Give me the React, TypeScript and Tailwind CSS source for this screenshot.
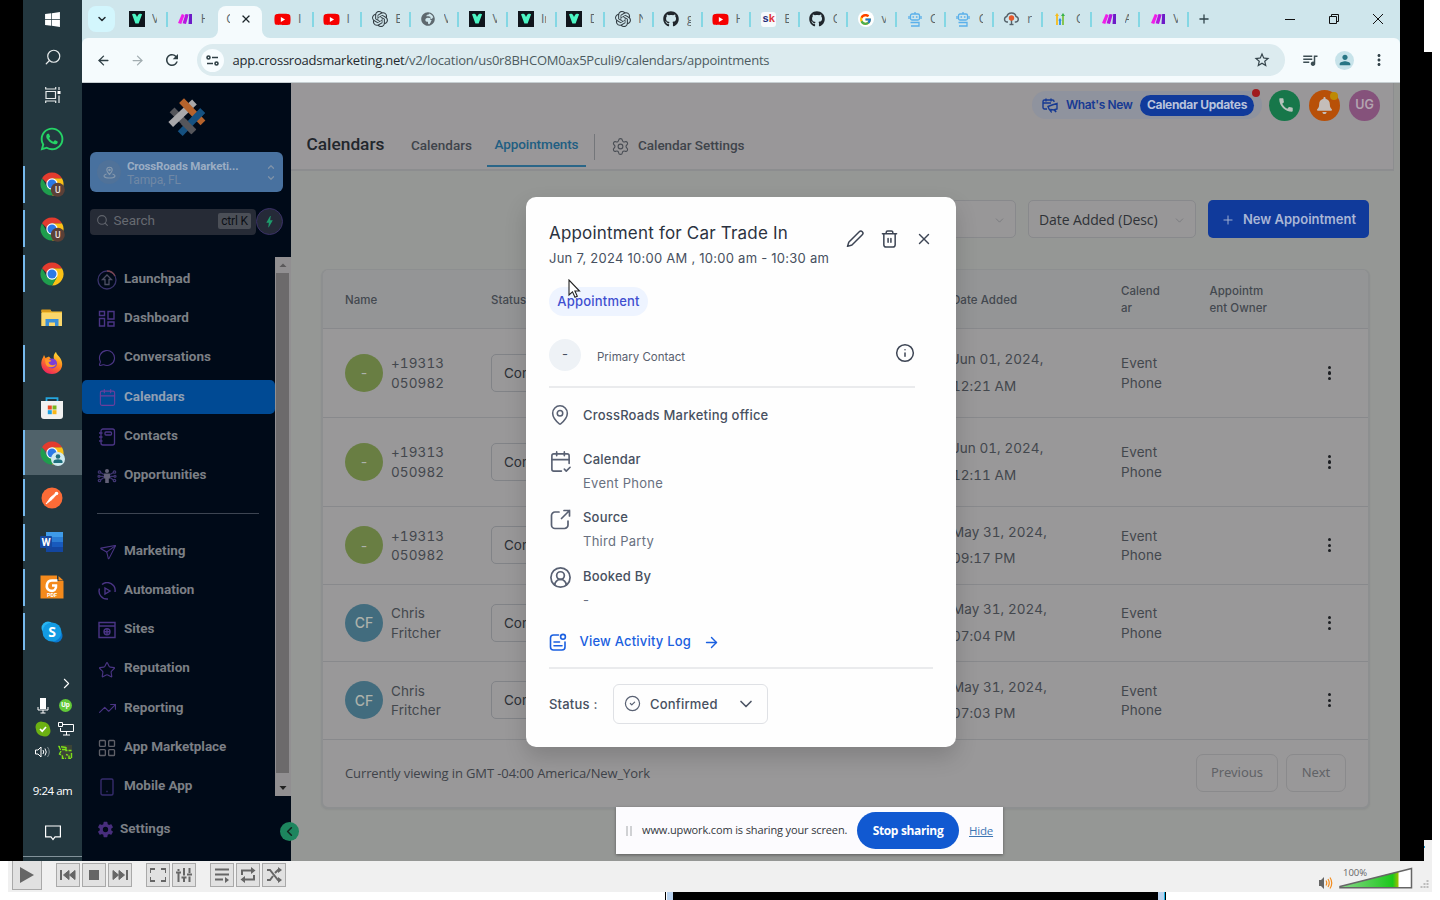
import React from "react";
import {
  ArrowLeft, ArrowRight, Calendar, ChevronDown, ChevronLeft, ChevronRight, ChevronUp, CircleCheck, Info,
  LayoutGrid, MapPin, MessageCircle, Plus, Search, Send, Settings, Star,
  TrendingUp, X, CalendarCheck2, CircleUserRound,
} from "lucide-react";
import { FaGithub, FaYoutube, FaWhatsapp, FaWindows, FaBell, FaGlobeAfrica } from "react-icons/fa";
import { SiOpenai } from "react-icons/si";
import { FcGoogle } from "react-icons/fc";
import { IoSettingsSharp } from "react-icons/io5";
import { MdBolt, MdCall, MdMoreVert, MdOutlineQueueMusic, MdPerson, MdRefresh, MdStarOutline } from "react-icons/md";

/* ---------- favicons ---------- */

const VIcon = () => (
  <svg width="16" height="16" viewBox="0 0 16 16">
    <rect width="16" height="16" fill="#10151c" />
    <path d="M3 3.2c1.6-1 3.6-.5 4.2 1L8 6l.9-1.800c.7-1.500 2.700-2 4.200-1L9.600 12.500H6.400z" fill="#4df5c4" />
  </svg>
);
const MakeIcon = () => (
  <svg width="14" height="14" viewBox="1 1 14 14">
    <path d="M4.800 3 7.600 4 4.300 13 1 12z" fill="#f01fe8" />
    <path d="M8.500 3l3.200.6L9 13l-3.400-.7z" fill="#b516e0" />
    <path d="M12.200 3H15v10h-3.500z" fill="#6d1bc8" />
  </svg>
);
const SkIcon = () => (
  <div className="flex h-[15px] w-[15px] items-center justify-center rounded-[3px] bg-[#f6fafc] pb-px font-['Liberation_Sans'] text-[11px] leading-none font-bold">
    <span className="text-[#1d2a7a]">s</span>
    <span className="text-[#e0343a]">k</span>
  </div>
);
const BotIcon = () => (
  <svg width="14" height="16" viewBox="1 0 14 16" fill="none" stroke="#5ab0ea" strokeWidth="1.300">
    <rect x="3.500" y="3" width="9" height="6" rx="1.500" />
    <path d="M8 3V1M2 5v3M14 5v3M3.500 11.500h8.500v3.500h-8" />
    <path d="M6.300 5.300v1.500M9.700 5.300v1.500" strokeWidth="1.600" />
  </svg>
);
const CloudIcon = () => (
  <svg width="17" height="16" viewBox="0 0 17 16" fill="none" stroke="#55626a" strokeWidth="1.400">
    <path d="M5 11H3.800a2.800 2.800 0 0 1 0-5.500C4.500 3 6.500 2 8.500 2s4 1 4.500 3.500a2.800 2.800 0 0 1 0 5.500h-1.200" />
    <path d="M8.500 8v6" />
    <circle cx="8.500" cy="7" r="2" fill="#e8592b" stroke="#e8592b" />
    <path d="M6.500 13.500h4" />
  </svg>
);
const ArrowsIcon = () => (
  <svg width="10" height="14" viewBox="0 0 10 14" fill="none" strokeWidth="1.800">
    <path d="M2 13V3" stroke="#f6bd1c" />
    <path d="m0 4 2-3 2 3z" fill="#f6bd1c" />
    <path d="M5 13V8" stroke="#2d8fe8" />
    <path d="m3.200 8.500 1.800-2.500 1.800 2.500z" fill="#2d8fe8" />
    <path d="M8 13V3" stroke="#7dc242" />
    <path d="m6 4 2-3 2 3z" fill="#37b24d" />
  </svg>
);
const YT = () => (
  <span className="relative flex items-center justify-center">
    <span className="absolute h-[6px] w-[8px] bg-white" />
    <FaYoutube size={17} color="#f60000" className="relative" />
  </span>
);
const GIcon = () => (
  <span className="flex h-4 w-4 items-center justify-center rounded-full bg-white"><FcGoogle size={13} /></span>
);

type Tab = { icon: React.ReactNode; t: string; sep?: boolean; active?: boolean };
const tabs: Tab[] = [
  { icon: <VIcon />, t: "V", sep: true },
  { icon: <MakeIcon />, t: "H" },
  { icon: null, t: "C", active: true },
  { icon: <YT />, t: "I", sep: true },
  { icon: <YT />, t: "I", sep: true },
  { icon: <SiOpenai size={16} color="#333e44" />, t: "E", sep: true },
  { icon: <FaGlobeAfrica size={14} color="#5d686e" />, t: "V", sep: true },
  { icon: <VIcon />, t: "V", sep: true },
  { icon: <VIcon />, t: "In", sep: true },
  { icon: <VIcon />, t: "D", sep: true },
  { icon: <SiOpenai size={16} color="#333e44" />, t: "N", sep: true },
  { icon: <FaGithub size={16} color="#20262c" />, t: "g", sep: true },
  { icon: <YT />, t: "H", sep: true },
  { icon: <SkIcon />, t: "E", sep: true },
  { icon: <FaGithub size={16} color="#20262c" />, t: "C", sep: true },
  { icon: <GIcon />, t: "v", sep: true },
  { icon: <BotIcon />, t: "C", sep: true },
  { icon: <BotIcon />, t: "C", sep: true },
  { icon: <CloudIcon />, t: "r", sep: true },
  { icon: <ArrowsIcon />, t: "C", sep: true },
  { icon: <MakeIcon />, t: "A", sep: true },
  { icon: <MakeIcon />, t: "V", sep: true },
];

function TabStrip() {
  return (
    <div className="flex h-[38px] bg-[#cfe6ec] pl-[6px]">
      <div className="mt-[6px] flex h-[26px] w-[27px] items-center justify-center rounded-[8px] bg-[#d3f6fd]">
        <ChevronDown size={12} strokeWidth={3} color="#222b30" />
      </div>
      <div className="ml-[4px] flex">
        {tabs.map((tab, i) =>
          tab.active ? (
            <div key={i} className="relative mr-[3px] ml-[2px] flex h-[38px] w-[43.640px] pt-[6px]">
              <div className="flex flex-1 items-center rounded-t-[8px] bg-[#f5fbfd] pb-[6px] pl-[8px]">
                <span className="w-[4px] overflow-hidden font-['Open_Sans'] text-[12px] text-[#58666c]">C</span>
                <X size={12} strokeWidth={2.600} color="#1d262b" className="ml-[10px]" />
              </div>
              <svg className="absolute bottom-0 -left-[8px]" width="8" height="8"><path d="M8 0v8H0a8 8 0 0 0 8-8z" fill="#f5fbfd" /></svg>
              <svg className="absolute -right-[8px] bottom-0" width="8" height="8"><path d="M0 0v8h8a8 8 0 0 1-8-8z" fill="#f5fbfd" /></svg>
            </div>
          ) : (
            <div key={i} className="flex h-[38px] w-[48.640px] items-center">
              <div className="ml-[8.500px] flex w-[18px] shrink-0 justify-center">{tab.icon}</div>
              <span className="ml-[6.500px] w-[4.500px] overflow-hidden font-['Open_Sans'] text-[12px] text-[#58666c]">{tab.t}</span>
              {tab.sep && <span className="ml-auto h-[15px] w-[2px] bg-[#84d7e4]" />}
            </div>
          )
        )}
      </div>
      <div className="ml-[7px] flex w-4 items-center justify-center"><Plus size={14} strokeWidth={2.200} color="#30434a" /></div>
      <div className="ml-auto flex items-center">
        <svg width="10" height="10" className="mr-[34px]"><path d="M0 5.500h10" stroke="#111" /></svg>
        <svg width="10" height="10" viewBox="0 0 10 10" fill="none" stroke="#111" className="mr-[34px]"><path d="M.5 2.500h7v7h-7zM2.500 2.500v-2h7v7h-2" /></svg>
        <svg width="10" height="10" viewBox="0 0 10 10" stroke="#111" className="mr-[17px]"><path d="M0 0l10 10M10 0L0 10" /></svg>
      </div>
    </div>
  );
}

function Toolbar() {
  return (
    <div className="flex h-[45px] items-center bg-[#cfe6ec]">
      <div className="flex h-full w-full items-center rounded-t-[6px] border-b-[1px] border-[#c6ced1] bg-[#f5fbfd] font-['Open_Sans']">
        <ArrowLeft size={15} strokeWidth={2.200} color="#2f3f45" className="ml-[14px]" />
        <ArrowRight size={15} strokeWidth={2} color="#a2adb1" className="ml-[19px]" />
        <MdRefresh size={18} color="#2f3f45" className="ml-[18px]" />
        <div className="ml-[16px] flex h-[32px] w-[1088px] items-center rounded-full bg-[#dcebef]">
          <div className="ml-[4px] flex h-[23px] w-[23px] items-center justify-center rounded-full bg-[#f8fdff]">
            <svg width="13" height="11" viewBox="0 0 13 11" fill="none" stroke="#2f3f45" strokeWidth="1.600"><circle cx="2.500" cy="2.500" r="1.500" /><path d="M6 2.500h6M1 8.500h6" /><circle cx="10.500" cy="8.500" r="1.500" /></svg>
          </div>
          <span className="ml-[8.500px] pt-px text-[13px] tracking-[-0.215px] whitespace-nowrap text-[#4d5b61]">
            <span className="text-[#1f292e]">app.crossroadsmarketing.net</span>/v2/location/us0r8BHCOM0ax5Pculi9/calendars/appointments
          </span>
          <MdStarOutline size={18} color="#33434a" className="mr-[14px] ml-auto" />
        </div>
        <MdOutlineQueueMusic size={18} color="#3c4d53" className="ml-[16px]" />
        <div className="ml-[16px] flex h-[19px] w-[19px] items-center justify-center rounded-full bg-[#c7e3ea]"><MdPerson size={16} color="#287685" /></div>
        <MdMoreVert size={18} color="#33434a" className="ml-[16px]" />
      </div>
    </div>
  );
}

/* ---------- OS taskbar ---------- */

const Chrome = ({ badge }: { badge?: "u" | "p" }) => (
  <svg width="26" height="26" viewBox="0 0 26 26" className="overflow-visible">
    <path d="M13 7.250h9.960A11.500 11.500 0 0 1 13 24.500l5-8.600z" fill="#fbc116" />
    <path d="M8 15.900 3.040 7.250A11.500 11.500 0 0 0 13 24.500l5-8.600z" fill="#1f9d4d" />
    <path d="M13 1.500A11.500 11.500 0 0 0 3.040 7.250l5 5L13 7.250h9.960A11.500 11.500 0 0 0 13 1.500z" fill="#e33b2e" />
    <circle cx="13" cy="13" r="5.700" fill="#fff" />
    <circle cx="13" cy="13" r="4.500" fill="#2b79e6" />
    {badge === "u" && (
      <>
        <circle cx="18.800" cy="18.700" r="7" fill="#5b4037" />
        <text x="18.800" y="22" fontSize="8.500" fontFamily="Roboto" fontWeight="500" fill="#efe8e5" textAnchor="middle">U</text>
      </>
    )}
    {badge === "p" && (
      <>
        <circle cx="19" cy="19" r="7" fill="#cfe9ef" />
        <circle cx="19" cy="16.500" r="2.300" fill="#1f6f7d" />
        <path d="M14.500 23v-1.500c0-3 9-3 9 0V23z" fill="#1f6f7d" />
      </>
    )}
  </svg>
);
const Folder = () => (
  <svg width="22" height="18" viewBox="0 0 22 18"><path d="M.5 1h9l1 1.500h10.500V17H.5z" fill="#f6c23c" /><path d="M.5.500h9l1 2.500H.5z" fill="#d99a1c" /><path d="M.5 4h20.500v13H.5z" fill="#fbd76b" /><path d="M4.500 17v-7h13v7h-3.500v-3.500h-6V17z" fill="#3b8fd8" /></svg>
);
const Firefox = () => (
  <svg width="24" height="24" viewBox="0 0 24 24">
    <defs><linearGradient id="ff" x1=".8" y1="0" x2=".3" y2="1"><stop offset="0" stopColor="#ffe43a" /><stop offset=".45" stopColor="#ff8a1c" /><stop offset="1" stopColor="#ee1f5f" /></linearGradient></defs>
    <path d="M4 4l1.500 3L9 5.500 11 8h3c-1-3 .5-6 2-7 .5 2.500 3 4 4.500 6.500C25 15 20 23 12 23 5 23 .8 17.500 1.300 11.500 1.700 8 3 7 4 4z" fill="url(#ff)" />
    <circle cx="12" cy="12.500" r="5" fill="#7b3fd6" />
    <path d="M5 8.500c3-.5 5 0 6.500 1.500l-3 1.200c1 3 4 4 7.500 1.800-1 4-9 5-10.500-.5z" fill="#ff9a2a" />
  </svg>
);
const Store = () => (
  <svg width="22" height="22" viewBox="0 0 22 22"><path d="M5.500 5V1.200h11V5" fill="none" stroke="#25a5dd" strokeWidth="1.800" /><path d="M0 4h22v15a3 3 0 0 1-3 3H3a3 3 0 0 1-3-3z" fill="#f1f1f1" /><path d="M6.800 8.500h4v4h-4z" fill="#ea4b26" /><path d="M11.500 8.500h4v4h-4z" fill="#7ab51d" /><path d="M6.800 13.200h4v4h-4z" fill="#1ba1e2" /><path d="M11.500 13.200h4v4h-4z" fill="#f8b617" /></svg>
);
const Postman = () => (
  <svg width="22" height="22" viewBox="0 0 22 22"><circle cx="11" cy="11" r="10.500" fill="#fb6b37" /><path d="M5 17l4.500-6.500 5-4 .8 1.200-4.300 4.800z" fill="#fff" stroke="#fff" strokeWidth=".8" /><circle cx="15.500" cy="6.500" r="1.800" fill="#fff" /></svg>
);
const Word = () => (
  <svg width="24" height="22" viewBox="0 0 24 22"><path d="M6 1h17v5H6z" fill="#3f9be8" /><path d="M6 6h17v5H6z" fill="#2b7cd3" /><path d="M6 11h17v5H6z" fill="#185abd" /><path d="M6 16h17v5H6z" fill="#1346a0" /><rect x="0" y="5" width="12" height="12" rx="1" fill="#1549a0" /><text x="6" y="15" fontSize="10.500" fontFamily="Roboto" fontWeight="700" fill="#fff" textAnchor="middle">W</text></svg>
);
const Foxit = () => (
  <svg width="24" height="24" viewBox="0 0 24 24"><path d="M.5.500H17V6h6.500v17.500H.5z" fill="#f48a1c" /><path d="M18.500 1l5 4.500h-5z" fill="#f48a1c" /><path d="M17.500 5.500H12a5.200 5.200 0 0 0-2 10c4 1.300 6.500-1.300 6-5H12" fill="none" stroke="#fff" strokeWidth="2.600" /><text x="12" y="22.300" fontSize="5.500" fontFamily="Roboto" fontWeight="700" fill="#fff" textAnchor="middle">PDF</text></svg>
);
const Skype = () => (
  <svg width="22" height="22" viewBox="0 0 22 22"><circle cx="7" cy="7" r="6.500" fill="#28b5f2" /><circle cx="15" cy="15" r="6.500" fill="#0a78d0" /><circle cx="11" cy="11" r="9.500" fill="#139be3" /><text x="11" y="16" fontSize="14" fontFamily="Open Sans" fontWeight="700" fill="#fff" textAnchor="middle">S</text></svg>
);

const apps: { el: React.ReactNode; open?: boolean; active?: boolean }[] = [
  { el: <FaWhatsapp size={26} color="#25d366" /> },
  { el: <Chrome badge="u" />, open: true },
  { el: <Chrome badge="u" />, open: true },
  { el: <Chrome />, open: true },
  { el: <Folder /> },
  { el: <Firefox />, open: true },
  { el: <Store /> },
  { el: <Chrome badge="p" />, open: true, active: true },
  { el: <Postman />, open: true },
  { el: <Word />, open: true },
  { el: <Foxit />, open: true },
  { el: <Skype />, open: true },
];

function Taskbar() {
  return (
    <div className="flex h-full w-[59px] flex-col bg-[#23373f]">
      <div className="flex h-[38px] items-center justify-center"><FaWindows size={17} color="#fff" /></div>
      <div className="flex h-[38px] items-center justify-center"><Search size={18} strokeWidth={1.600} color="#e7ebec" className="-scale-x-100" /></div>
      <div className="flex h-[38px] items-center justify-center">
        <svg width="16" height="16" viewBox="0 0 16 16" fill="none" stroke="#e7ebec" strokeWidth="1.200"><path d="M1 4.500h9.500v7H1zM.7 0v2h10V0M.7 16v-2h10v2M14 0v3M14 8.500V16" /><path d="M12.500 4h3v3h-3z" fill="#fff" stroke="none" /></svg>
      </div>
      <div className="mt-[3px] flex flex-col">
        {apps.map((a, i) => (
          <div key={i} className={"flex h-[44.770px] items-center " + (a.active ? "bg-[#50626a]" : "")}>
            <div className={"w-[2px] " + (a.active ? "h-full bg-[#76b9ed]" : a.open ? "h-[37px] bg-[#76b9ed]" : "h-0")} />
            <div className="flex flex-1 items-center justify-center pr-[3px]">{a.el}</div>
          </div>
        ))}
      </div>
      <div className="mt-[18px] flex h-[22px] items-center pl-[35px]"><ChevronRight size={17} strokeWidth={1.500} color="#fff" /></div>
      <div className="grid grid-cols-[23px_23px] grid-rows-[23px_23px_23px] place-items-center pl-[8px]">
        <svg width="12" height="16" viewBox="0 0 12 16" fill="none" stroke="#fff"><rect x="3.500" y=".5" width="5" height="10" fill="#fff" /><path d="M1 9v3h10V9M6 12v3M3.500 15h5" /></svg>
        <span className="flex h-[13px] w-[13px] items-center justify-center rounded-full bg-[#62c939] font-['Roboto'] text-[7px] font-bold text-white">Up</span>
        <svg width="16" height="16" viewBox="0 0 16 16"><circle cx="6" cy="6" r="5.500" fill="#6cb113" /><circle cx="10" cy="10" r="5.500" fill="#6cb113" /><circle cx="8" cy="8" r="7" fill="#6cb113" /><path d="m5 8 2.200 2.200L11 6" fill="none" stroke="#fff" strokeWidth="1.700" /></svg>
        <svg width="16" height="14" viewBox="0 0 16 14" fill="none" stroke="#fff"><path d="M5 2.500h10.500v7H2.500V6M8.500 9.500v3.500M5 13h7M.5.500h4v4h-4z" /></svg>
        <svg width="16" height="12" viewBox="0 0 16 12" fill="none" stroke="#fff"><path d="M.5 4h2.500l3-3v10L3 8H.5zM8 4q1.500 2 0 4M10 2.500q2.500 3.500 0 7" /><path d="M12.500 1q3.500 5 0 10" stroke="#7f8c91" /></svg>
        <svg width="15" height="14" viewBox="0 0 15 14"><path d="M3 0h11v14H3z" fill="#3c4436" /><path d="M8 2.500 1 1.500 3 6 1.500 9l3 2V13.500h3.500M4 4.500h4.500M8 2v3.500h5.500M13.500 8v5.500H11V10.500L8 9.500" fill="none" stroke="#7be01a" strokeWidth="1.400" strokeDasharray="5 1" /></svg>
      </div>
      <div className="mt-[16px] text-center font-['Open_Sans'] text-[11.500px] leading-[24px] tracking-[-0.450px] whitespace-nowrap text-white">9:24 am</div>
      <div className="mt-[20px] flex justify-center pt-[2px]">
        <svg width="16" height="16" viewBox="0 0 16 16" fill="none" stroke="#fff" strokeWidth="1.200"><path d="M.6 1h14.800v10.800H10L8 14.500l-2-2.700H.6z" /></svg>
      </div>
      <div className="mt-auto mb-[4px] h-px bg-[#82929a]" />
    </div>
  );
}

/* ---------- App sidebar ---------- */

const P = "#4a3585";
const sidebarTop: [React.ReactNode, string][] = [
  [<svg width="20" height="20" viewBox="0 0 20 20" fill="none" stroke="#39336b" strokeWidth="1.300"><circle cx="10" cy="10" r="9" /><path d="M10 1a9 9 0 0 1 8 5" stroke="#7a4550" /><path d="m10 5 4.500 4.500h-2.500v5H8v-5H5.500z" stroke="#4c4f63" /></svg>, "Launchpad"],
  [<svg width="18" height="18" viewBox="0 0 18 18" fill="none" stroke={P} strokeWidth="1.400"><path d="M1.500 1.500h5v4h-5zM1.500 8.500h5v7.500h-5zM10 1.500h6v7.500h-6zM10 12h6v4h-6z" /></svg>, "Dashboard"],
  [<MessageCircle size={18} strokeWidth={1.500} color={P} />, "Conversations"],
  [<Calendar size={19} strokeWidth={1.400} color="#6b3f9c" />, "Calendars"],
  [<svg width="18" height="18" viewBox="0 0 18 18" fill="none" stroke={P} strokeWidth="1.300"><rect x="3" y="1" width="13.500" height="16" rx="2" /><rect x="7" y="4" width="6.500" height="3" rx="1" /><path d="M1 5h3.500M1 9h3.500M1 13h3.500" /></svg>, "Contacts"],
  [<svg width="20" height="18" viewBox="0 0 20 18" fill="none" stroke="#3f3570" strokeWidth="1.300"><circle cx="10" cy="4" r="2" fill="#626077" stroke="none" /><path d="M7 6.500h6v5h-1.200V16H8.200v-4.500H7z" fill="#626077" stroke="none" /><circle cx="2.500" cy="5" r="1.200" /><circle cx="17.500" cy="5" r="1.200" /><circle cx="2" cy="9.300" r="1" /><circle cx="18" cy="9.300" r="1" /><circle cx="2.500" cy="13.500" r="1.200" /><circle cx="17.500" cy="13.500" r="1.200" /><path d="M3.500 5.500 7 7.500M16.500 5.500 13 7.500M3.500 13 7 10.500M16.500 13 13 10.500M3 9.300h4M17 9.300h-4" /></svg>, "Opportunities"],
];
const sidebarBottom: [React.ReactNode, string][] = [
  [<Send size={17} strokeWidth={1.500} color={P} className="rotate-[8deg]" />, "Marketing"],
  [<svg width="18" height="18" viewBox="0 0 18 18" fill="none" stroke={P} strokeWidth="1.400"><path d="M4 2.500A8 8 0 0 1 17 10M1.500 6.500A8 8 0 0 0 10 17M7 6l5 3-5 3z" /></svg>, "Automation"],
  [<svg width="18" height="18" viewBox="0 0 18 18" fill="none" stroke={P} strokeWidth="1.400"><path d="M1 1.500h16v15H1zM1 5h16" /><circle cx="9" cy="10.800" r="3" /><path d="M6 10.800h6M9 7.800v6" /></svg>, "Sites"],
  [<Star size={18} strokeWidth={1.500} color={P} />, "Reputation"],
  [<TrendingUp size={19} strokeWidth={1.400} color={P} />, "Reporting"],
  [<LayoutGrid size={20} strokeWidth={1.600} color="#5f6068" />, "App Marketplace"],
  [<svg width="14" height="18" viewBox="0 0 14 18" fill="none" stroke="#352c6c" strokeWidth="1.400"><rect x="1" y="1" width="12" height="16" rx="1.500" /><path d="M6.300 13.500h1.400" /></svg>, "Mobile App"],
];

const NavItem = ({ icon, label }: { icon: React.ReactNode; label: string }) => (
  <div className="flex h-[39.300px] shrink-0 items-center">
    <div className={"flex h-[34px] w-full items-center pl-[15px] " + (label === "Calendars" ? "rounded-[5px] bg-[#004a94] text-[#8f9fb3]" : "text-[#7b7f85]")}>
      <span className="flex w-[20px] justify-center pt-[1.500px]">{icon}</span>
      <span className="ml-[7px] pb-[2.500px] text-[13.500px] font-bold tracking-[-0.050px]">{label}</span>
    </div>
  </div>
);

function Sidebar() {
  return (
    <div className="relative flex h-full w-[209px] flex-col bg-[#000a18] font-['Roboto']">
      <div className="flex h-[69px] shrink-0 items-center justify-center pb-[2px]">
        <svg width="38" height="38" viewBox="0 0 112 112" fill="none" strokeWidth="20">
          <path d="M12 35 76 100" stroke="#55565b" />
          <path d="M102 37 36 105" stroke="#155181" />
          <path d="M78 12 8 78" stroke="#a9a8aa" />
          <path d="M40 8 103 73" stroke="#b5632c" />
          <path d="M46 70 76 100" stroke="#55565b" />
          <path d="M102 37 76 64" stroke="#155181" />
        </svg>
      </div>
      <div className="ml-[8px] flex h-[40px] w-[193px] shrink-0 items-center rounded-[6px] bg-[#48719f]">
        <div className="ml-[7px] flex h-[24px] w-[24px] items-center justify-center rounded-full bg-[#507299]">
          <svg width="13" height="13" viewBox="0 0 13 13" fill="none" stroke="#8699ad" strokeWidth="1.100"><path d="M6.500 8.500C4.500 6.500 3.800 5.500 3.800 4a2.700 2.700 0 0 1 5.400 0c0 1.500-.7 2.500-2.700 4.500z" /><circle cx="6.500" cy="4" r=".7" /><path d="M3.500 8C-1 9.500 1 12 6.500 12s7.500-2.500 3-4" /></svg>
        </div>
        <div className="ml-[6px] pt-px text-[12px] leading-[14px] text-[#8497ae]">
          <div className="text-[11.500px] font-bold tracking-[-0.160px] text-[#9badc3]">CrossRoads Marketi...</div>
          <div className="tracking-[-0.150px] text-[#7088a5]">Tampa, FL</div>
        </div>
        <div className="mr-[7px] ml-auto flex flex-col gap-[1px]">
          <ChevronUp size={10} strokeWidth={3} color="#7f92a8" />
          <ChevronDown size={10} strokeWidth={3} color="#7f92a8" />
        </div>
      </div>
      <div className="mt-[15px] ml-[8px] flex h-[28px] shrink-0 items-center">
        <div className="mt-px flex h-[26px] w-[166px] items-center rounded-[4px] bg-[#262b36] pb-[2px] pl-[6px]">
          <Search size={13} strokeWidth={2} color="#60646c" />
          <span className="ml-[4.500px] text-[13.500px] text-[#666a71]">Search</span>
          <span className="mr-[5px] ml-auto rounded-[2px] bg-[#4b4f57] px-[3px] text-[12px] leading-[16px] tracking-[-0.150px] text-[#0c0f16]">ctrl K</span>
        </div>
        <div className="flex h-[27px] w-[27px] items-center justify-center rounded-full border border-[#3b3168] bg-[#252a38]"><MdBolt size={15} color="#1e9b6c" /></div>
      </div>
      <div className="mt-[22px] flex h-[539px] shrink-0">
        <div className="flex w-[192.500px] flex-col pt-[2.500px]">
          {sidebarTop.map(([icon, label]) => <NavItem key={label} icon={icon} label={label} />)}
          <div className="mt-[18px] mr-[16px] mb-[17px] ml-[15px] h-px shrink-0 bg-[#3d4552]" />
          {sidebarBottom.map(([icon, label]) => <NavItem key={label} icon={icon} label={label} />)}
        </div>
        <div className="flex w-[16.500px] flex-col items-center bg-[#918f91]">
          <svg width="8" height="16" viewBox="0 0 8 16"><path d="M4 6.500 7.500 10h-7z" fill="#5b595b" /></svg>
          <div className="w-[13px] flex-1 bg-[#6c6a6b]" />
          <svg width="8" height="23" viewBox="0 0 8 23"><path d="M4 17 .5 13h7z" fill="#222" /></svg>
        </div>
      </div>
      <div className="flex h-[66px] shrink-0 items-center pl-[15px] text-[13.500px] font-bold text-[#7b7f85]">
        <IoSettingsSharp size={17} color="#482e7d" />
        <span className="ml-[6px] pb-px">Settings</span>
      </div>
      <div className="absolute right-[-8px] bottom-[20px] flex h-[19px] w-[19px] items-center justify-center rounded-full bg-[#1d855e]"><ChevronLeft size={15} strokeWidth={2.500} color="#12251f" /></div>
    </div>
  );
}

/* ---------- Main content ---------- */

const rows = [
  { h: "h-[89px]", a: "-", n1: "+19313", n2: "050982", d1: "Jun 01, 2024,", d2: "12:21 AM" },
  { h: "h-[89px]", a: "-", n1: "+19313", n2: "050982", d1: "Jun 01, 2024,", d2: "12:11 AM" },
  { h: "h-[77.500px]", a: "-", n1: "+19313", n2: "050982", d1: "May 31, 2024,", d2: "09:17 PM" },
  { h: "h-[77.500px]", a: "CF", n1: "Chris", n2: "Fritcher", d1: "May 31, 2024,", d2: "07:04 PM" },
  { h: "h-[77.500px]", a: "CF", n1: "Chris", n2: "Fritcher", d1: "May 31, 2024,", d2: "07:03 PM" },
];

function Header() {
  return (
    <div className="mr-[6px] h-[88px] border-r border-b-2 border-[#8c8d8f] bg-[#999799]">
      <div className="flex h-[44px] items-center justify-end pr-[13px] font-['Inter']">
        <div className="relative flex h-[28px] w-[230px] items-center rounded-full bg-[#8f939e] pl-[10px]">
          <svg width="16" height="15" viewBox="0 0 16 15" fill="none" stroke="#163a93" strokeWidth="1.400"><path d="M5 11H2.500A1.500 1.500 0 0 1 1 9.500V3.500A1.500 1.500 0 0 1 2.500 2h8A1.500 1.500 0 0 1 12 3.500V4M1 5h8M4 .5v3M9 .5v3" /><path d="M6 8.500 10 7l5-1.500V11l-2 .5 1 2.500-1.800-2L9 11.500v2l-2-2.500z" /></svg>
          <span className="ml-[8px] text-[12px] font-semibold tracking-[-0.380px] whitespace-nowrap text-[#173a93]">What's New</span>
          <span className="ml-auto mr-[8px] flex h-[21px] w-[114px] items-center justify-center rounded-full bg-[#103a9b] text-[12px] font-bold tracking-[-0.300px] whitespace-nowrap text-[#b9c3dc]">Calendar Updates</span>
          <span className="absolute top-[-2px] right-[2px] h-[8px] w-[8px] rounded-full bg-[#a01b1e]" />
        </div>
        <div className="ml-[7px] flex h-[31px] w-[31px] items-center justify-center rounded-full bg-[#17774a]"><MdCall size={18} color="#b6c2bb" className="translate-x-px" /></div>
        <div className="relative ml-[9px] flex h-[31px] w-[31px] items-center justify-center rounded-full bg-[#b85008]">
          <FaBell size={17} color="#c4bdb9" />
          <span className="absolute top-[2px] right-[2px] h-[8px] w-[8px] rounded-full bg-[#bd8a05]" />
        </div>
        <div className="ml-[9px] flex h-[31px] w-[31px] items-center justify-center rounded-full bg-[#85527b] text-[12.500px] font-semibold text-[#b3a5b0]">UG</div>
      </div>
      <div className="flex h-[40px] items-center pl-[15.500px] font-['Roboto'] font-medium whitespace-nowrap">
        <span className="w-[104.500px] pb-[5px] text-[17.300px] text-[#22262c]">Calendars</span>
        <span className="w-[76px] pb-[4px] text-[13.500px] text-[#3f444b]">Calendars</span>
        <span className="flex h-full w-[99px] items-center justify-center border-b-2 border-[#2a6688] pb-[3px] text-[13.500px] tracking-[-0.100px] text-[#215e82]">Appointments</span>
        <span className="ml-[8px] h-[26px] w-px bg-[#74767a]" />
        <Settings size={19} strokeWidth={1.400} color="#4a4e55" className="mb-[1px] ml-[16px]" />
        <span className="ml-[8px] pb-[4px] text-[13.500px] tracking-[-0.050px] text-[#3f444b]">Calendar Settings</span>
      </div>
    </div>
  );
}

function Main() {
  return (
    <div className="flex min-w-0 flex-1 flex-col bg-[#959795]">
      <Header />
      <div className="mt-[29px] mr-[31px] flex h-[38px] justify-end gap-[12px] font-['Open_Sans'] text-[14px]">
        <div className="flex w-[168px] items-center justify-end rounded-[5px] border border-[#88898c] bg-[#989798] pt-[3px] pr-[9px]"><ChevronDown size={13} strokeWidth={1.300} color="#707276" /></div>
        <div className="flex w-[168px] items-center justify-between rounded-[5px] border border-[#88898c] bg-[#989798] pt-px pr-[9px] pl-[10px]">
          <span className="tracking-[-0.100px] whitespace-nowrap text-[#2f3237]">Date Added (Desc)</span>
          <ChevronDown size={13} strokeWidth={1.300} color="#707276" className="mt-[2px]" />
        </div>
        <div className="flex w-[161px] items-center justify-center rounded-[5px] bg-[#103a9b] pt-px font-['Inter'] text-[13px] font-semibold whitespace-nowrap text-[#a9b6d6]">
          <Plus size={14} strokeWidth={1.600} className="mr-[8px]" />
          New Appointment
        </div>
      </div>
      <div className="mt-[31px] ml-[30px] flex h-[540px] w-[1049px] flex-col rounded-[7px] border-2 border-t border-[#8d8f90] bg-[#999899] font-['Inter'] shadow-xs">
        <div className="grid h-[59px] shrink-0 grid-cols-[146px_461px_169px_88.500px_1fr] items-center rounded-t-[6px] border-b border-[#88898c] bg-[#949596] pt-[2px] pl-[22px] text-[11.500px] leading-[17px] font-medium tracking-[0.050px] text-[#43484f]">
          <span>Name</span>
          <span>Status</span>
          <span>Date Added</span>
          <span>Calend<br />ar</span>
          <span>Appointm<br />ent Owner</span>
        </div>
        {rows.map((r, i) => (
          <div key={i} className={r.h + " grid shrink-0 grid-cols-[146px_461px_169px_88.500px_1fr] items-center border-b border-[#88898c] pl-[22px] text-[13.500px] leading-[19.300px] tracking-[0.100px] text-[#43474d] tabular-nums"}>
            <div className="flex items-center">
              <span className={"flex h-[38px] w-[38px] items-center justify-center rounded-full text-[14px] tracking-normal text-[#adb2ab] " + (r.a === "-" ? "bg-[#697e43]" : "bg-[#426c7e] font-medium")}>{r.a}</span>
              <span className="ml-[8px] pt-[1.500px]">{r.n1}<br />{r.n2}</span>
            </div>
            <div className="flex h-[38px] w-[168px] items-center rounded-[5px] border border-[#818387] pt-px pl-[12px] tracking-normal text-[#2c3036]">Confirmed</div>
            <div className="leading-[26.700px] tracking-[0.050px]">{r.d1}<br />{r.d2}</div>
            <div className="pt-[1.500px]">Event<br />Phone</div>
            <div className="flex flex-col items-start gap-[2.200px] pl-[118px]">
              <i className="h-[3.300px] w-[3.300px] rounded-full bg-[#1c1e22]" />
              <i className="h-[3.300px] w-[3.300px] rounded-full bg-[#1c1e22]" />
              <i className="h-[3.300px] w-[3.300px] rounded-full bg-[#1c1e22]" />
            </div>
          </div>
        ))}
        <div className="flex flex-1 items-center pr-[22px] pl-[22px] font-['Open_Sans'] text-[13px]">
          <span className="tracking-[-0.110px] text-[#3f4349]">Currently viewing in GMT -04:00 America/New_York</span>
          <span className="ml-auto flex h-[38px] w-[82px] items-center justify-center rounded-[7px] border border-[#8a8a8c] pb-px font-['Noto_Sans'] text-[#606266]">Previous</span>
          <span className="ml-[8px] flex h-[38px] w-[60px] items-center justify-center rounded-[7px] border border-[#8a8a8c] pb-px font-['Noto_Sans'] text-[#606266]">Next</span>
        </div>
      </div>
    </div>
  );
}

/* ---------- Dialog ---------- */

const EditIcon = () => (
  <svg width="18" height="18" viewBox="0 0 24 24" fill="none" stroke="#3d4554" strokeWidth="2" strokeLinecap="round" strokeLinejoin="round"><path d="M21.700 6.300a2.500 2.500 0 0 0-4-4L4.300 15.600a3 3 0 0 0-.8 1.300L2 21.800l5-1.400a3 3 0 0 0 1.300-.8z" /></svg>
);
const Trash = () => (
  <svg width="17" height="20" viewBox="0 0 18 20" fill="none" stroke="#3d4554" strokeWidth="1.600" strokeLinecap="round"><path d="M1.500 4.500h15M5.500 4.500V3A1.500 1.500 0 0 1 7 1.500h4A1.500 1.500 0 0 1 12.500 3v1.500M3 4.500V16a2.500 2.500 0 0 0 2.500 2.500h7a2.500 2.500 0 0 0 2.500-2.500V4.500M7.500 9.500v4M10.500 9.500v4" /></svg>
);
const SourceIcon = () => (
  <svg width="21" height="21" viewBox="0 0 21 21" fill="none" stroke="#596173" strokeWidth="1.700" strokeLinecap="round"><path d="M9 3H5a3.500 3.500 0 0 0-3.500 3.500V16A3.500 3.500 0 0 0 5 19.500h9.500A3.500 3.500 0 0 0 18 16v-4M11.500 9.500l8-8M14 1.500h5.500V7" /></svg>
);
const LogIcon = () => (
  <svg width="18" height="18" viewBox="0 0 18 18" fill="none" stroke="#1a5fe0" strokeWidth="1.600" strokeLinecap="round"><path d="M9.500 2H4.500A3 3 0 0 0 1.500 5v9a3 3 0 0 0 3 3h8.500a3 3 0 0 0 3-3V9M5 9h5.500M5 12.800h8" /><circle cx="14" cy="3.800" r="2.400" /></svg>
);

const Detail = ({ icon, label, value }: { icon: React.ReactNode; label: string; value: string }) => (
  <div className="flex h-[58.400px]">
    <span className="flex h-[28px] w-[22px] items-center justify-center">{icon}</span>
    <div className="ml-[12px] leading-[24px]">
      <div className="font-medium text-[#475060]">{label}</div>
      <div className="tracking-[0.270px] text-[#687080]">{value}</div>
    </div>
  </div>
);

function Dialog() {
  return (
    <div className="absolute top-[197px] left-[444px] flex h-[550px] w-[430px] flex-col rounded-[10px] bg-[#fefefe] pl-[23px] font-['Inter'] text-[13px] tracking-[0.200px] whitespace-nowrap text-[#475060] shadow-[0_10px_22px_rgba(0,0,0,0.160)]">
      <div className="flex h-[73px] pt-[24px]">
        <div className="w-[297px] leading-[25px]">
          <div className="text-[17px] tracking-[0.190px] text-[#2b3240]">Appointment for Car Trade In</div>
          <div className="tracking-[0.250px]">Jun 7, 2024 10:00 AM , 10:00 am - 10:30 am</div>
        </div>
        <div className="flex h-[36px] items-center">
          <EditIcon />
          <span className="ml-[16.500px]"><Trash /></span>
          <X size={18} strokeWidth={1.900} color="#3d4554" className="ml-[17px]" />
        </div>
      </div>
      <div className="mt-[17px] flex h-[29px] w-[99px] items-center justify-center rounded-full bg-[#eef4ff] text-[13px] font-medium text-[#3f4fd0]">Appointment</div>
      <div className="mt-[23px] mr-[41px] flex h-[49px] border-b-2 border-[#eaebed]">
        <span className="flex h-[32px] w-[32px] items-center justify-center rounded-full bg-[#eef2f6]">-</span>
        <span className="ml-[16px] pt-[2px] text-[11.500px] leading-[33px] tracking-[0px] text-[#59606e]">Primary Contact</span>
        <Info size={20} strokeWidth={1.800} color="#3d4554" className="mt-[4px] ml-auto" />
      </div>
      <div className="mt-[15px] flex h-[24px] items-center">
        <span className="flex w-[22px] justify-center"><MapPin size={22} strokeWidth={1.700} color="#596173" /></span>
        <span className="ml-[12px] pt-[2px] font-medium">CrossRoads Marketing office</span>
      </div>
      <div className="mt-[20px]">
        <Detail icon={<CalendarCheck2 size={23} strokeWidth={1.700} color="#596173" className="shrink-0" />} label="Calendar" value="Event Phone" />
        <Detail icon={<SourceIcon />} label="Source" value="Third Party" />
        <Detail icon={<CircleUserRound size={23} strokeWidth={1.800} color="#596173" className="shrink-0" />} label="Booked By" value="-" />
      </div>
      <div className="mr-[23px] flex h-[46.800px] items-center border-b-2 border-[#eaebed] pb-[5px] font-medium text-[#1a5fe0]">
        <LogIcon />
        <span className="ml-[12.500px]">View Activity Log</span>
        <ArrowRight size={17} strokeWidth={2} className="ml-[12px]" />
      </div>
      <div className="mt-[15px] flex h-[40px] items-center font-medium">
        <span className="w-[64px] pt-[2px]">Status :</span>
        <div className="flex h-[40px] w-[155px] items-center rounded-[6px] border border-[#dfe1e5] pl-[10px]">
          <CircleCheck size={17} strokeWidth={1.700} color="#596173" />
          <span className="ml-[9px] pt-px">Confirmed</span>
          <ChevronDown size={20} strokeWidth={2} color="#4d5565" className="ml-[18px]" />
        </div>
      </div>
    </div>
  );
}

function ShareBar() {
  return (
    <div className="absolute top-[807px] left-[534px] flex h-[47px] w-[387px] items-center bg-[#fcfbfe] pl-[10px] font-['Open_Sans'] text-[11px] whitespace-nowrap text-[#33373c] shadow-[0_1px_3px_rgba(0,0,0,0.400)]">
      <span className="h-[10px] w-[6px] border-x-2 border-[#d0d1d4]" />
      <span className="ml-[10px] w-[215px] tracking-[-0.130px]">www.upwork.com is sharing your screen.</span>
      <span className="flex h-[37px] w-[102px] items-center justify-center rounded-full bg-[#1159d1] text-[12px] font-bold tracking-[-0.350px] text-white">Stop sharing</span>
      <span className="ml-[10px] text-[11.500px] tracking-[-0.200px] text-[#3e76b4] underline">Hide</span>
    </div>
  );
}

/* ---------- Player ---------- */

const PBtn = ({ children, ml = "" }: { children: React.ReactNode; ml?: string }) => (
  <span className={"flex h-[24px] w-[24px] items-center justify-center border border-[#a9a9a9] bg-[#e1e1e1] " + ml}>
    <svg width="16" height="16" viewBox="0 0 16 16" fill="none" stroke="#666" strokeWidth="2">{children}</svg>
  </span>
);

function Player() {
  return (
    <div className="ml-[8px] flex h-[31px] w-[1424px] bg-[#f0f0f0] pl-[4px]">
      <span className="flex h-[29px] w-[30px] items-center justify-center border border-t-0 border-[#a9a9a9] bg-[#e1e1e1]">
        <svg width="14" height="16"><path d="M0 0v16l14-8z" fill="#666" /></svg>
      </span>
      <div className="flex gap-[2px] pt-[2px]">
        <PBtn ml="ml-[14px]"><path d="M1.500 3v10M15 3.500 9.500 8l5.500 4.500zM9 3.500 3.500 8 9 12.500z" fill="#666" strokeWidth="1" /><path d="M1 3v10" /></PBtn>
        <PBtn><path d="M3 3h10v10H3z" fill="#666" stroke="none" /></PBtn>
        <PBtn><path d="M1 3.500 6.500 8 1 12.500zM7 3.500 12.500 8 7 12.500z" fill="#666" strokeWidth="1" /><path d="M15 3v10" /></PBtn>
        <PBtn ml="ml-[12px]"><path d="M0 6V2h5M11 2h5v4M16 10v4h-5M5 14H0v-4" /></PBtn>
        <PBtn><path d="M2.500 2v2M2.500 6.500V15M8 1v7.500M8 11.500V15M13.500 1v5M13.500 9.500V15M0 5.500h5M5.500 10.500h5M11 7.500h5" strokeWidth="2" /></PBtn>
        <PBtn ml="ml-[12px]"><path d="M1 2.500h14M1 7.500h14M1 12.500h8" /><path d="m11 10 4 3-4 3z" fill="#666" stroke="none" /></PBtn>
        <PBtn><path d="M2 8V3.500h11M14 8v4.500H3" /><path d="m11 0 4.500 3.500L11 7zM5 9 .5 12.500 5 16z" fill="#666" stroke="none" /></PBtn>
        <PBtn><path d="M1 3h3l8 10h2M1 13h3l3-4M9 6l3-3h2" /><path d="m12 0 4 3-4 3zM12 10l4 3-4 3z" fill="#666" stroke="none" /></PBtn>
      </div>
      <div className="mr-[2px] ml-auto flex">
        <svg width="16" height="14" viewBox="0 0 16 14" className="mt-[15px]" fill="none"><path d="M1 4v6h2l3 3V1L3 4z" fill="#666" /><path d="M8 4.500q1.500 2.500 0 5M10 3q2.500 4 0 8M12 1.500q3.500 5.500 0 11" stroke="#f28c1e" strokeWidth="1.200" /></svg>
        <svg width="76" height="24" viewBox="0 0 76 24" className="mt-[5px] ml-[4px]">
          <defs><linearGradient id="vol"><stop offset="0" stopColor="#8ad78a" /><stop offset=".9" stopColor="#1cc81c" /><stop offset="1" stopColor="#9fc000" /></linearGradient></defs>
          <path d="M2 20.500 74 2v20H2z" fill="#fff" />
          <path d="M2 20.500 60.500 5.500V22H2z" fill="url(#vol)" />
          <path d="M2 20.500 73.500 2.500v19.200H2z" fill="none" stroke="#666" strokeWidth="1.500" />
          <text x="5" y="10" fontSize="9.500" fontFamily="Open Sans" fill="#666">100%</text>
        </svg>
        <svg width="10" height="10" viewBox="0 0 10 10" className="mt-[19px] ml-[6px]" fill="#bcbcbc"><path d="M6.500 0h2v2h-2zM3.500 3h2v2h-2zM6.500 3h2v2h-2zM.5 6h2v2h-2zM3.500 6h2v2h-2zM6.500 6h2v2h-2z" /></svg>
      </div>
    </div>
  );
}

export default function App() {
  return (
    <div className="flex h-[900px] w-[1440px] flex-col overflow-hidden bg-white">
      <div className="flex h-[861px] shrink-0">
        <div className="w-[23px] bg-black" />
        <Taskbar />
        <div className="relative flex w-[1318px] flex-col">
          <TabStrip />
          <Toolbar />
          <div className="flex h-[778px]">
            <Sidebar />
            <Main />
          </div>
          <Dialog />
          <svg className="absolute top-[279px] left-[486px]" width="13" height="20" viewBox="0 0 13 20"><path d="M1 1v15l3.500-3.200 2.500 5.500 2.300-1-2.400-5.300H11.500z" fill="#fff" stroke="#222" strokeWidth="1.100" /></svg>
          <ShareBar />
        </div>
        <div className="w-[24px] bg-black" />
        <div className="flex w-[8px] flex-col">
          <div className="h-[52px] bg-white" />
          <div className="h-[788px] bg-black" />
          <div className="flex-1 bg-[#f0f0f0] pt-[6px]"><div className="h-[2px] w-px bg-[#1c9ad6]" /></div>
        </div>
      </div>
      <Player />
      <div className="ml-[665px] flex h-[8px]">
        <span className="w-px bg-black" />
        <span className="ml-px w-[6px] bg-[#b9d3ef]" />
        <span className="w-[485px] bg-black" />
        <span className="w-[6px] bg-[#b9d3ef]" />
        <span className="w-px bg-[#18b4e8]" />
        <span className="w-px bg-black" />
      </div>
    </div>
  );
}
